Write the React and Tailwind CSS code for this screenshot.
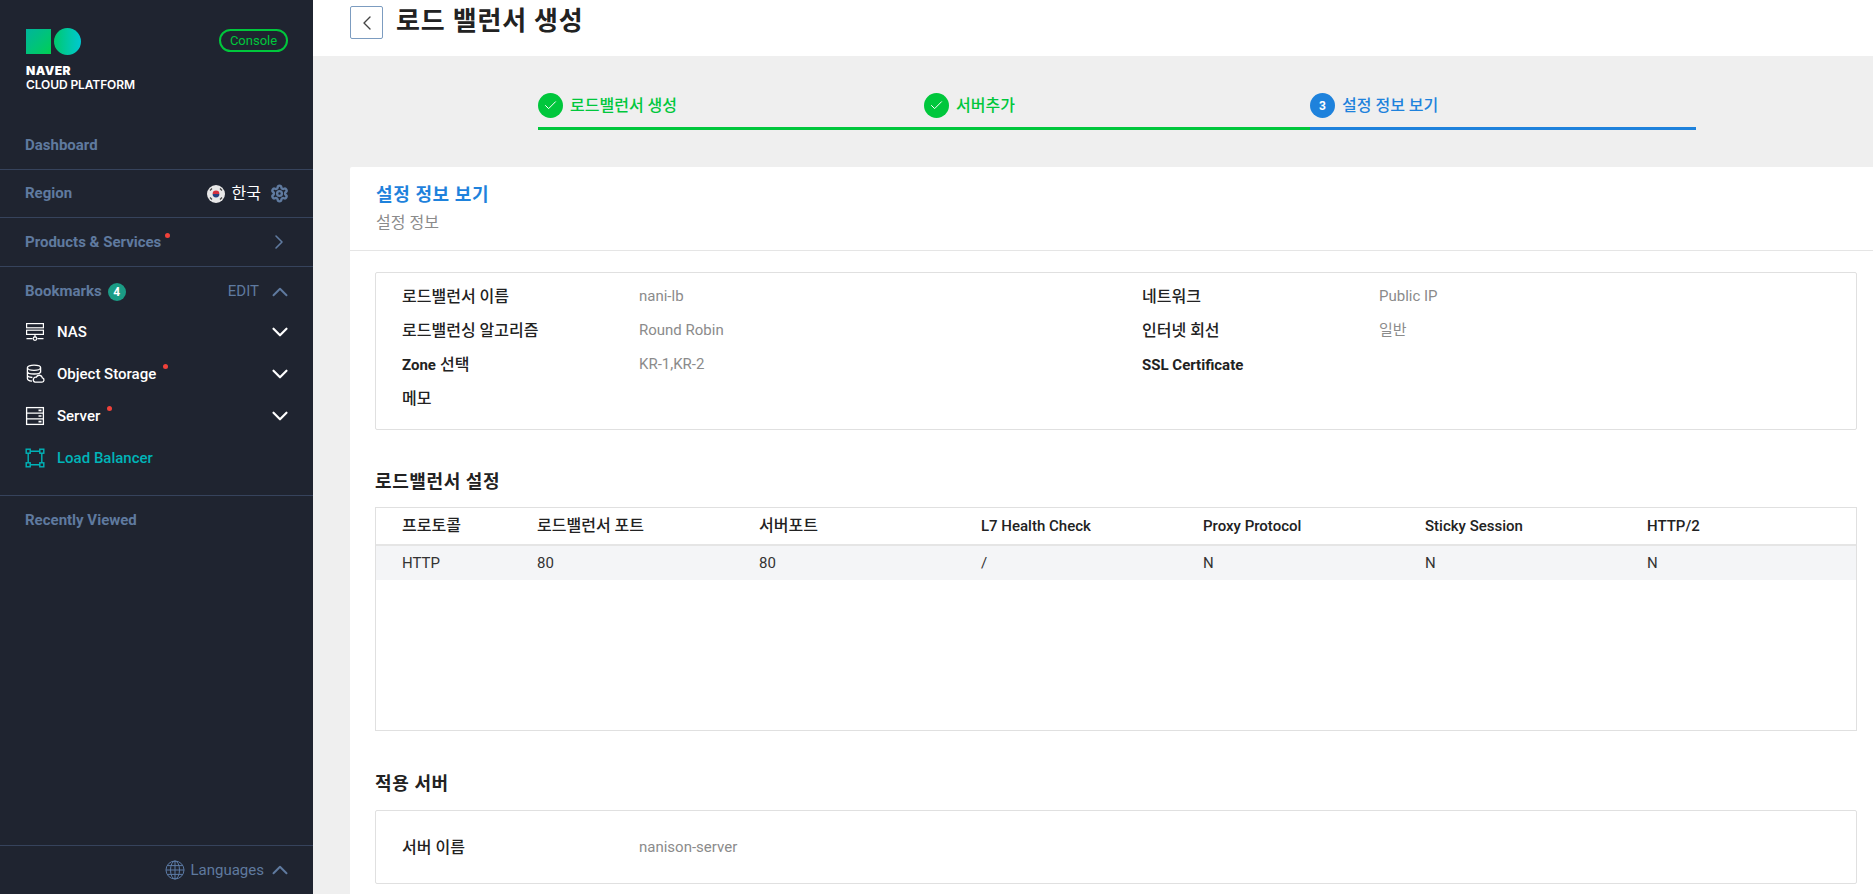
import React from 'react';
import { ChevronDown, ChevronLeft, ChevronRight, ChevronUp, Check, Settings } from 'lucide-react';

const FONT = "font-['Roboto','Noto_Sans_CJK_KR',sans-serif]";

const Dot = ({ className }) => <span className={`absolute w-[5px] h-[5px] rounded-full bg-[#f0413a] ${className}`} />;

const NasIcon = () => (
  <svg width="20" height="20" viewBox="0 0 20 20" fill="none" stroke="#fff" strokeWidth="1.2">
    <rect x="1.6" y="1.6" width="16.8" height="4.2" />
    <rect x="1.6" y="8.2" width="16.8" height="4.2" />
    <path d="M10 12.5v3M1.5 16.6h6M12.5 16.6h6" />
    <circle cx="10" cy="16.6" r="1.8" />
  </svg>
);

const StorageIcon = () => (
  <svg width="20" height="20" viewBox="0 0 20 20" fill="none" stroke="#fff" strokeWidth="1.3">
    <ellipse cx="9" cy="3.8" rx="6.6" ry="2.6" />
    <path d="M2.4 3.8v10.6c0 1.5 2.2 2.5 4.6 2.7M15.6 3.8v4.6M2.4 7.4c0 1.4 3 2.6 6.6 2.6s6.6-1.2 6.6-2.6M2.4 11c0 1.3 2.2 2.3 5 2.5" />
    <path d="M10 18.2h7a2.2 2.2 0 0 0 .4-4.3 3.2 3.2 0 0 0-6.1-.7 2.6 2.6 0 0 0-1.3 5z" fill="#1f2430" />
  </svg>
);

const ServerIcon = () => (
  <svg width="20" height="20" viewBox="0 0 20 20" fill="none" stroke="#fff" strokeWidth="1.3">
    <rect x="1.6" y="1.6" width="16.8" height="16.8" />
    <path d="M1.6 7.2h16.8M1.6 12.8h16.8" />
    <path d="M13.5 4.4h3M13.5 10h3M13.5 15.6h3" strokeWidth="1.6" />
  </svg>
);

const BalancerIcon = () => (
  <svg width="20" height="20" viewBox="0 0 20 20" fill="none" stroke="#00b4b8" strokeWidth="1.4">
    <rect x="1.2" y="1.2" width="4" height="4" />
    <rect x="14.8" y="1.2" width="4" height="4" />
    <rect x="1.2" y="14.8" width="4" height="4" />
    <rect x="14.8" y="14.8" width="4" height="4" />
    <path d="M5.2 3.2h9.6M5.2 16.8h9.6M3.2 5.2v9.6M16.8 5.2v9.6" />
  </svg>
);

const GlobeIcon = () => (
  <svg width="20" height="20" viewBox="0 0 20 20" fill="none" stroke="#5c7ba6" strokeWidth="1">
    <circle cx="10" cy="10" r="9" />
    <ellipse cx="10" cy="10" rx="4.5" ry="9" />
    <path d="M10 1v18M1 10h18M2.2 5.6h15.6M2.2 14.4h15.6" />
  </svg>
);

const FlagIcon = () => (
  <svg width="18" height="18" viewBox="0 0 18 18">
    <circle cx="9" cy="9" r="9" fill="#e8e8e8" />
    <path d="M5.6 9a3.4 3.4 0 0 1 6.8 0z" fill="#d5303e" />
    <path d="M5.6 9a3.4 3.4 0 0 0 6.8 0z" fill="#27417f" />
    <g stroke="#444" strokeWidth="1.2">
      <path d="M3 5.5l2-2M13 3.5l2 2M3 12.5l2 2M13 14.5l2-2" />
    </g>
  </svg>
);

const NavItem = ({ icon, label, dotClass, active }) => (
  <div className="h-[42px] pl-[25px] pr-[20px] flex items-center">
    <span className="w-[20px] h-[20px] shrink-0">{icon}</span>
    <span className={`relative ml-[12px] text-[15px] font-medium ${active ? 'text-[#00b4b8]' : 'text-white'}`}>
      {label}
      {dotClass && <Dot className={dotClass} />}
    </span>
    {!active && <ChevronDown className="ml-auto text-white" size={26} strokeWidth={2} />}
  </div>
);

const Sidebar = () => (
  <aside className="w-[313px] shrink-0 h-full bg-[#1f2430] flex flex-col">
    <div className="h-[121px] pl-[26px] pr-[25px] pt-[28px] flex justify-between items-start">
      <div>
        <div className="flex items-center gap-[3px]">
          <div className="w-[25px] h-[25px] bg-gradient-to-br from-[#00b49b] to-[#00d04f]" />
          <div className="w-[27px] h-[27px] rounded-full bg-gradient-to-r from-[#00c86a] to-[#00c8d0]" />
        </div>
        <div className="mt-[9px] text-white font-['Inter',sans-serif] text-[12px] leading-[14px]">
          <div className="font-black tracking-[0.5px]">NAVER</div>
          <div className="font-semibold tracking-[-0.1px]">CLOUD PLATFORM</div>
        </div>
      </div>
      <div className="w-[69px] h-[23px] mt-[1px] border-2 border-[#00c73c] rounded-full flex items-center justify-center text-[#00c73c] text-[13px]">
        Console
      </div>
    </div>
    <div className="h-[49px] pl-[25px] flex items-center border-b border-[#36435c] text-[#5f7a9f] text-[15px] font-bold">Dashboard</div>
    <div className="h-[48px] pl-[25px] pr-[24px] flex items-center border-b border-[#36435c]">
      <span className="text-[#5f7a9f] text-[15px] font-bold">Region</span>
      <span className="ml-auto"><FlagIcon /></span>
      <span className="ml-[7px] text-white text-[16px]">한국</span>
      <Settings className="ml-[9px] text-[#5f7a9f]" size={19} strokeWidth={3} />
    </div>
    <div className="h-[49px] pl-[25px] pr-[22px] flex items-center border-b border-[#36435c]">
      <span className="relative text-[#5f7a9f] text-[15px] font-bold">
        Products &amp; Services
        <Dot className="top-[2px] -right-[9px]" />
      </span>
      <ChevronRight className="ml-auto text-[#5f7a9f]" size={24} strokeWidth={1.6} />
    </div>
    <div className="h-[49px] pl-[25px] pr-[20px] flex items-center">
      <span className="text-[#5f7a9f] text-[15px] font-bold">Bookmarks</span>
      <span className="ml-[6px] w-[18px] h-[18px] rounded-full bg-[#1b9c85] text-white text-[12px] font-bold flex items-center justify-center">4</span>
      <span className="ml-auto text-[#5f7a9f] text-[15px]">EDIT</span>
      <ChevronUp className="ml-[8px] text-[#5f7a9f]" size={26} strokeWidth={1.8} />
    </div>
    <div className="-mt-[5px]">
      <NavItem icon={<NasIcon />} label="NAS" />
      <NavItem icon={<StorageIcon />} label="Object Storage" dotClass="top-[1px] -right-[12px]" />
      <NavItem icon={<ServerIcon />} label="Server" dotClass="top-[1px] -right-[12px]" />
      <NavItem icon={<BalancerIcon />} label="Load Balancer" active />
    </div>
    <div className="mt-[16px] h-[49px] pl-[25px] flex items-center border-t border-[#36435c] text-[#5f7a9f] text-[15px] font-bold">Recently Viewed</div>
    <div className="mt-auto h-[49px] pr-[20px] flex items-center justify-end border-t border-[#36435c] text-[#5f7a9f] text-[15px]">
      <GlobeIcon />
      <span className="ml-[6px]">Languages</span>
      <ChevronUp className="ml-[3px]" size={26} strokeWidth={1.8} />
    </div>
  </aside>
);

const Step = ({ label, done, num }) => {
  const color = done ? 'text-[#00c73c]' : 'text-[#1e82dc]';
  return (
    <div className={`w-[386px] h-[37px] flex items-start gap-[7px] border-b-[3px] ${done ? 'border-[#00c73c]' : 'border-[#1e82dc]'}`}>
      <span className={`w-[25px] h-[25px] rounded-full flex items-center justify-center text-white text-[12px] font-bold ${done ? 'bg-[#00c73c]' : 'bg-[#1e82dc]'}`}>
        {done ? <Check size={15} strokeWidth={1.6} /> : num}
      </span>
      <span className={`text-[16px] font-medium leading-[25px] ${color}`}>{label}</span>
    </div>
  );
};

const Row = ({ label, value }) => (
  <div className="flex h-[34px] items-center">
    <span className="w-[237px] pt-[1px] text-[16px] font-medium text-[#222]">{label}</span>
    <span className="text-[15px] text-[#8b8b8b]">{value}</span>
  </div>
);

const COLS = ['프로토콜', '로드밸런서 포트', '서버포트', 'L7 Health Check', 'Proxy Protocol', 'Sticky Session', 'HTTP/2'];
const VALS = ['HTTP', '80', '80', '/', 'N', 'N', 'N'];
const GRID = 'grid grid-cols-[135px_222px_222px_222px_222px_222px_1fr] pl-[26px]';

const App = () => (
  <div className={`${FONT} w-full h-screen overflow-hidden flex bg-[#efefef]`}>
    <Sidebar />
    <main className="flex-1 min-w-0 flex flex-col">
      <header className="h-[56px] shrink-0 bg-white pl-[37px] flex items-start">
        <button className="w-[33px] h-[33px] mt-[6px] border border-[#7c9cc0] rounded-[2px] flex items-center justify-center text-[#444]">
          <ChevronLeft size={24} strokeWidth={1.4} />
        </button>
        <h1 className="ml-[13px] mt-[3px] text-[26px] leading-[36px] font-bold text-[#222] tracking-[0.8px]">로드 밸런서 생성</h1>
      </header>
      <div className="h-[111px] shrink-0 pl-[225px] pt-[37px] flex items-start">
        <Step label="로드밸런서 생성" done />
        <Step label="서버추가" done />
        <Step label="설정 정보 보기" num="3" />
      </div>
      <section className="flex-1 ml-[37px] bg-white rounded-tl-[2px]">
        <div className="h-[84px] pl-[26px] pt-[14px] border-b border-[#e5e5e5]">
          <h2 className="text-[18px] leading-[28px] font-bold text-[#1e82dc] tracking-[0.6px]">설정 정보 보기</h2>
          <p className="mt-[4px] text-[16px] leading-[20px] text-[#8b8b8b]">설정 정보</p>
        </div>
        <div className="pl-[25px] pr-[16px] pt-[21px]">
          <div className="h-[158px] border border-[#e0e0e0] rounded-[2px] pl-[26px] pt-[6px] grid grid-cols-[740px_1fr]">
            <div>
              <Row label="로드밸런서 이름" value="nani-lb" />
              <Row label="로드밸런싱 알고리즘" value="Round Robin" />
              <Row label={<span><b className="text-[15px] font-bold">Zone</b> 선택</span>} value="KR-1,KR-2" />
              <Row label="메모" value="" />
            </div>
            <div>
              <Row label="네트워크" value="Public IP" />
              <Row label="인터넷 회선" value="일반" />
              <Row label={<b className="text-[15px] font-bold">SSL Certificate</b>} value="" />
            </div>
          </div>
          <h3 className="mt-[39px] text-[18px] leading-[26px] font-bold text-[#222] tracking-[0.6px]">로드밸런서 설정</h3>
          <div className="mt-[12px] h-[224px] border border-[#e0e0e0]">
            <div className={`${GRID} h-[38px] items-center border-b-[2px] border-[#e5e5e5] text-[16px] font-medium text-[#222]`}>
              {COLS.map(c => <span key={c} className={/[A-Z]/.test(c) ? 'text-[15px]' : ''}>{c}</span>)}
            </div>
            <div className={`${GRID} h-[34px] items-center bg-[#f4f5f7] text-[15px] text-[#333]`}>
              {VALS.map((v, i) => <span key={i}>{v}</span>)}
            </div>
          </div>
          <h3 className="mt-[40px] text-[18px] leading-[26px] font-bold text-[#222] tracking-[0.6px]">적용 서버</h3>
          <div className="mt-[13px] h-[74px] border border-[#e0e0e0] rounded-[2px] pl-[26px] flex items-center">
            <Row label="서버 이름" value="nanison-server" />
          </div>
        </div>
      </section>
    </main>
  </div>
);

export default App;
